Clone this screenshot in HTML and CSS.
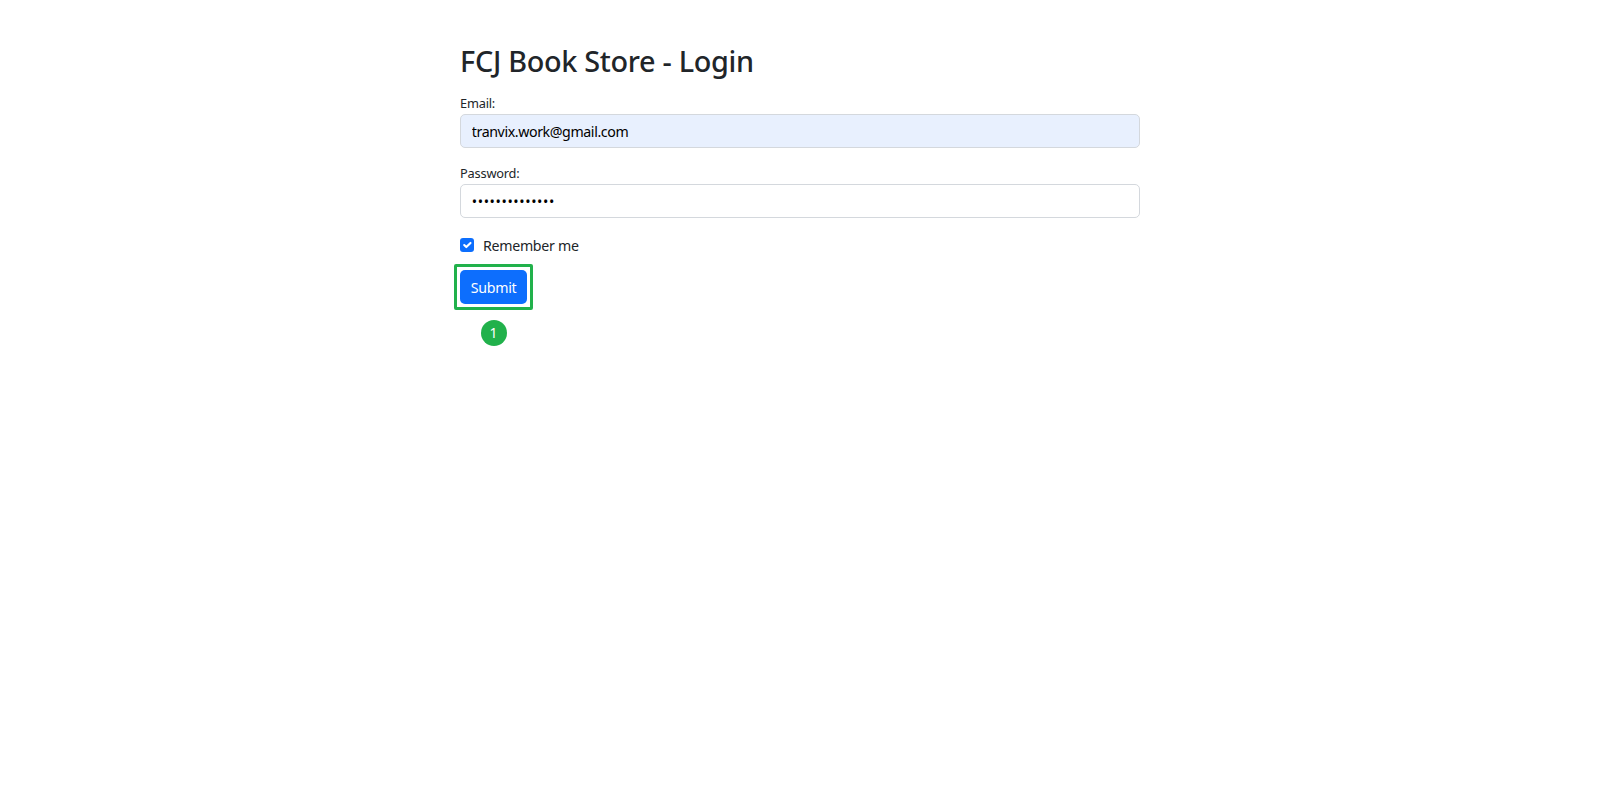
FILE: index.html
```html
<!DOCTYPE html>
<html lang="en">
<head>
<meta charset="utf-8">
<title>FCJ Book Store - Login</title>
<link rel="stylesheet" href="styles.css">
</head>
<body>
<main class="page">
  <div class="container">
    <h2 class="title">FCJ Book Store - Login</h2>
    <form class="login-form">
      <div class="field">
        <label class="field-label" for="email">Email:</label>
        <input class="field-input autofilled" id="email" type="email" value="tranvix.work@gmail.com">
      </div>
      <div class="field">
        <label class="field-label" for="password">Password:</label>
        <input class="field-input secret" id="password" type="password" value="xxxxxxxxxxxxxx">
      </div>
      <div class="check-row">
        <span class="checkbox">
          <svg viewBox="0 0 20 20" width="14" height="14"><path d="M6 10l3 3l6-6" fill="none" stroke="#fff" stroke-width="3" stroke-linecap="round" stroke-linejoin="round"/></svg>
        </span>
        <span class="check-label">Remember me</span>
      </div>
      <div class="submit-group">
        <span class="highlight">
          <button type="button" class="btn-submit">Submit</button>
        </span>
        <span class="badge">1</span>
      </div>
    </form>
  </div>
</main>
</body>
</html>
```
FILE: styles.css
```css
html, body {
  margin: 0;
  padding: 0;
  background: #fff;
}
body {
  font-family: "Noto Sans", "Open Sans", sans-serif;
  color: #212529;
}
.page {
  display: flex;
  justify-content: center;
  padding-top: 43px;
}
.container {
  width: 680px;
}
.title {
  margin: 0;
  font-size: 28.8px;
  font-weight: 500;
  line-height: 36px;
  letter-spacing: -0.3px;
}
.login-form {
  margin-top: 15px;
}
.field {
  margin-bottom: 16px;
}
.field-label {
  display: block;
  font-size: 12.8px;
  line-height: 18px;
  margin-bottom: 2px;
  letter-spacing: -0.2px;
}
.field-input {
  display: block;
  box-sizing: border-box;
  width: 100%;
  height: 34px;
  margin: 0;
  padding: 0 10.8px;
  border: 1px solid #d4d8dd;
  border-radius: 5px;
  background: #fff;
  font-family: inherit;
  font-size: 14.2px;
  color: #000;
  letter-spacing: -0.4px;
  outline: none;
}
.field-input.autofilled {
  background: #e8f0fe;
}
.field-input.secret {
  letter-spacing: 0.6px;
}
.check-row {
  display: flex;
  align-items: center;
  gap: 9px;
  height: 22px;
  margin-top: 13px;
}
.checkbox {
  display: flex;
  align-items: center;
  justify-content: center;
  width: 14px;
  height: 14px;
  border-radius: 3px;
  background: #0d6efd;
}
.check-label {
  font-size: 14.2px;
  letter-spacing: -0.3px;
}
.submit-group {
  display: inline-flex;
  flex-direction: column;
  align-items: center;
  margin-top: 8px;
  margin-left: -6px;
}
.highlight {
  display: flex;
  padding: 3px;
  border: 3px solid #21b14b;
  border-radius: 2px;
}
.btn-submit {
  height: 34px;
  padding: 0 10.8px;
  border: 0;
  border-radius: 5px;
  background: #0d6efd;
  color: #fff;
  font-family: inherit;
  font-size: 14.2px;
  letter-spacing: -0.3px;
}
.badge {
  display: flex;
  align-items: center;
  justify-content: center;
  width: 26px;
  height: 26px;
  margin-top: 10px;
  border-radius: 50%;
  background: #21b14b;
  color: #fff;
  font-size: 14px;
  line-height: 1;
}
```
